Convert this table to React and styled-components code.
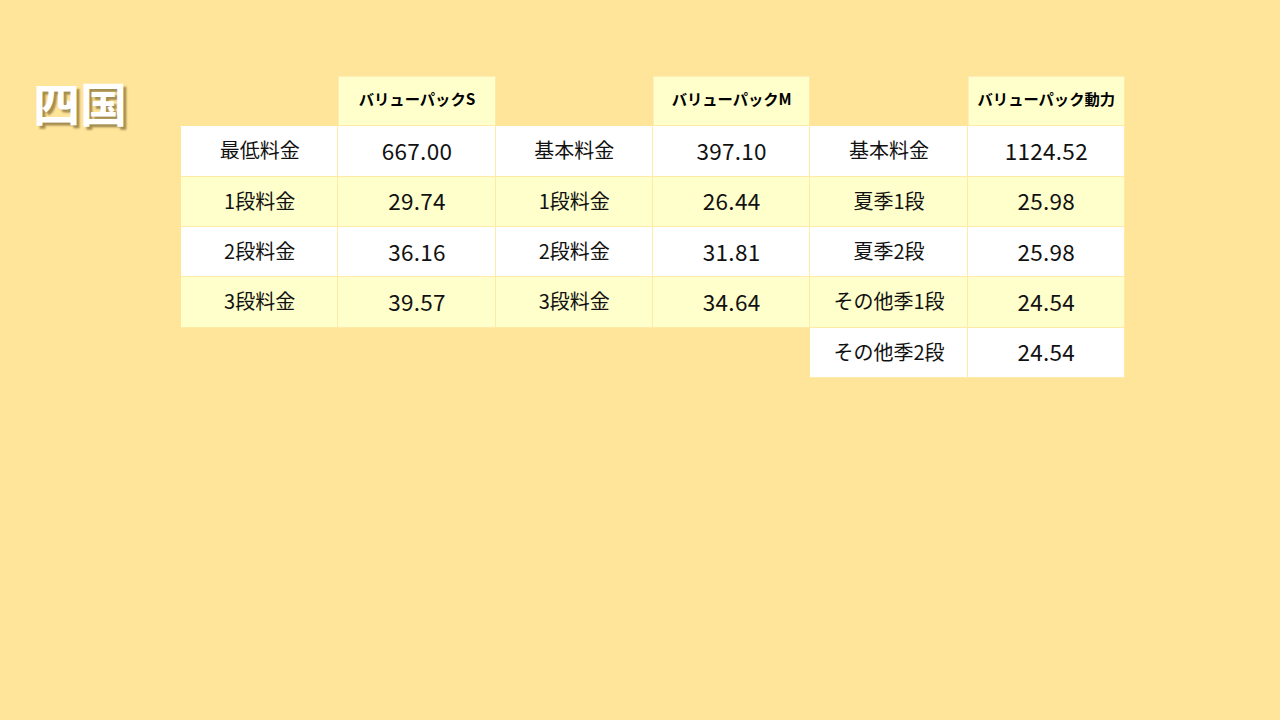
import React from "react";
import styled, { createGlobalStyle } from "styled-components";

const GlobalStyle = createGlobalStyle`
  html, body {
    margin: 0;
    padding: 0;
    background: #ffe599;
  }
  body {
    font-family: "Noto Sans CJK JP", "Noto Sans", sans-serif;
  }
`;

const Page = styled.div`
  width: 1280px;
  height: 720px;
  background: #ffe599;
  display: flex;
  align-items: flex-start;
  padding-top: 76px;
  box-sizing: border-box;
`;

const Title = styled.h1`
  width: 181px;
  flex-shrink: 0;
  box-sizing: border-box;
  padding-left: 33px;
  margin: 1px 0 0;
  font-size: 47px;
  line-height: 50px;
  font-weight: 700;
  color: #ffffff;
  text-shadow: 3px 3px 2px rgba(90, 70, 20, 0.55);
`;

const Grid = styled.div`
  display: grid;
  grid-template-columns: repeat(6, 157.33px);
  grid-auto-rows: 50.33px;
`;

const Cell = styled.div`
  display: flex;
  align-items: center;
  justify-content: center;
  box-sizing: border-box;
  background: ${(p) => (p.$empty ? "transparent" : p.$tone === "y" ? "#ffffcc" : "#ffffff")};
  box-shadow: ${(p) => (p.$empty ? "none" : "inset -1px -1px 0 #ffeaa8")};
  color: #111;
`;

const Head = styled(Cell)`
  font-size: 15.3px;
  font-weight: 700;
  padding-bottom: 6px;
  box-shadow: inset -1px -1px 0 #ffeaa8, inset 1px 1px 0 #ffeeb8;
  color: #000;
`;

const Label = styled.span`
  font-size: 20px;
  margin-top: -3px;
`;

const Num = styled.span`
  font-size: 22.5px;
  letter-spacing: 0.3px;
  margin-top: -3px;
`;

const heads = ["バリューパックS", "バリューパックM", "バリューパック動力"];

const rows = [
  ["最低料金", "667.00", "基本料金", "397.10", "基本料金", "1124.52"],
  ["1段料金", "29.74", "1段料金", "26.44", "夏季1段", "25.98"],
  ["2段料金", "36.16", "2段料金", "31.81", "夏季2段", "25.98"],
  ["3段料金", "39.57", "3段料金", "34.64", "その他季1段", "24.54"],
  [null, null, null, null, "その他季2段", "24.54"],
];

export default function App() {
  return (
    <Page>
      <GlobalStyle />
      <Title>四国</Title>
      <Grid>
        {heads.map((h) => (
          <React.Fragment key={h}>
            <Cell $empty />
            <Head $tone="y">{h}</Head>
          </React.Fragment>
        ))}
        {rows.map((r, i) =>
          r.map((v, j) =>
            v === null ? (
              <Cell key={i + "-" + j} $empty />
            ) : (
              <Cell key={i + "-" + j} $tone={i % 2 === 1 ? "y" : "w"}>
                {j % 2 === 0 ? <Label>{v}</Label> : <Num>{v}</Num>}
              </Cell>
            )
          )
        )}
      </Grid>
    </Page>
  );
}
